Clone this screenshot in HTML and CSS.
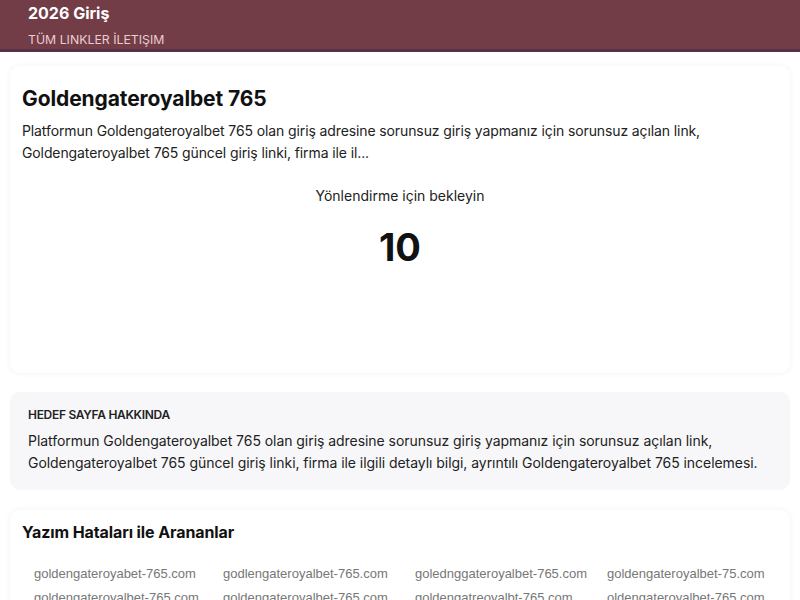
FILE: index.html
```html
<!DOCTYPE html>
<html lang="tr">
<head>
<meta charset="utf-8">
<link rel="stylesheet" href="styles.css">
</head>
<body>
<header class="top">
  <div class="brand">2026 Giriş</div>
  <nav class="nav"><span>TÜM LINKLER</span> <span>İLETIŞIM</span></nav>
</header>
<main class="wrap">
  <section class="card main-card">
    <h1 class="title">Goldengateroyalbet 765</h1>
    <p class="desc">Platformun Goldengateroyalbet 765 olan giriş adresine sorunsuz giriş yapmanız için sorunsuz açılan link, Goldengateroyalbet 765 güncel giriş linki, firma ile il...</p>
    <div class="wait">Yönlendirme için bekleyin</div>
    <div class="count">10</div>
  </section>
  <section class="about">
    <h2 class="about-h">HEDEF SAYFA HAKKINDA</h2>
    <p class="about-p">Platformun Goldengateroyalbet 765 olan giriş adresine sorunsuz giriş yapmanız için sorunsuz açılan link, Goldengateroyalbet 765 güncel giriş linki, firma ile ilgili detaylı bilgi, ayrıntılı Goldengateroyalbet 765 incelemesi.</p>
  </section>
  <section class="card typo">
    <h2 class="typo-h">Yazım Hataları ile Arananlar</h2>
    <div class="links">
      <a>goldengateroyabet-765.com</a>
      <a>godlengateroyalbet-765.com</a>
      <a>golednggateroyalbet-765.com</a>
      <a>goldengateroyalbet-75.com</a>
      <a>goldengateroyalbet-765.com</a>
      <a>goldengaterovalbet-765.com</a>
      <a>goldengatreoyalbt-765.com</a>
      <a>oldengateroyalbet-765.com</a>
    </div>
  </section>
</main>
</body>
</html>
```
FILE: styles.css
```css
* { box-sizing: border-box; }
html, body { margin: 0; padding: 0; background: #fff; }
body { font-family: Inter, "Noto Sans", sans-serif; color: #111; }
.top {
  background: #733d47;
  border-bottom: 3px solid #57304a;
  padding: 3px 28px 2px;
  height: 52px;
}
.brand { color: #fff; font-weight: 700; font-size: 16px; line-height: 20px; }
.nav { color: #e9cdd3; font-size: 12.3px; line-height: 18px; margin-top: 8px; }
.wrap { padding: 14px 10px 0; }
.card {
  background: #fff;
  border-radius: 10px;
  box-shadow: 0 0 6px rgba(0,0,0,0.06);
}
.main-card { padding: 20px 12px 0; height: 307px; }
.title { margin: 0; font-size: 21px; font-weight: 700; line-height: 26px; letter-spacing: -0.1px; }
.desc { margin: 8px 0 0; font-size: 14px; line-height: 22px; color: #222; letter-spacing: -0.11px; }
.wait { text-align: center; margin-top: 22px; font-size: 14px; line-height: 20px; color: #222; }
.count { text-align: center; font-size: 38px; font-weight: 700; line-height: 46px; margin-top: 18px; }
.about {
  margin-top: 19px;
  background: #f7f7f9;
  border-radius: 10px;
  padding: 16px 18px 16px;
}
.about-h { margin: 0; font-size: 12px; font-weight: 600; line-height: 14px; letter-spacing: -0.3px; color: #222; }
.about-p { margin: 8px 0 0; font-size: 14px; line-height: 22px; color: #222; letter-spacing: -0.05px; }
.typo { margin-top: 20px; padding: 12px 12px 10px; }
.typo-h { margin: 0; font-size: 16px; font-weight: 700; line-height: 20px; letter-spacing: -0.1px; }
.links {
  display: grid;
  grid-template-columns: 189px 192px 192px 1fr;
  row-gap: 8px;
  margin-top: 24px;
  padding-left: 12px;
}
.links a { font-family: "Liberation Sans", Arial, sans-serif; font-size: 13px; line-height: 16px; color: #777; }
```
